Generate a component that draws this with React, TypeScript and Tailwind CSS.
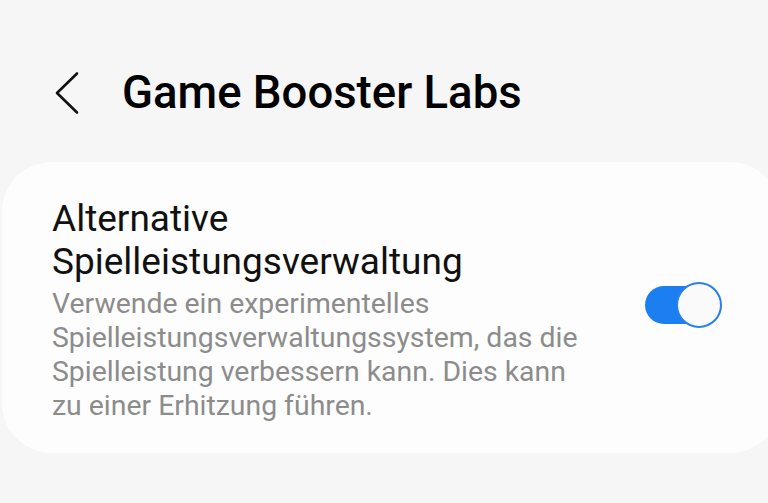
export default function App() {
  return (
    <div
      className="flex h-[503px] w-[768px] flex-col overflow-hidden bg-[#f6f6f6] text-black"
      style={{ fontFamily: "Roboto, 'Noto Sans', sans-serif" }}
    >
      <header className="flex h-[162px] items-center pl-[54px] pt-[24px]">
        <svg width="26" height="44" viewBox="0 0 26 44" fill="none" className="text-[#111]">
          <path d="M23 2.5 L3 22 L23 41.5" stroke="currentColor" strokeWidth="2.6" strokeLinecap="round" strokeLinejoin="round" />
        </svg>
        <h1 className="ml-[42px] text-[45.5px] font-medium leading-none">Game Booster Labs</h1>
      </header>

      <section className="ml-[2px] mr-[-12px] flex items-start rounded-[50px] bg-[#fdfdfd] pb-[30px] pl-[50px] pr-[58px] pt-[35px]">
        <div className="min-w-0 flex-1">
          <div className="text-[37px] leading-[43px] text-[#111]">
            Alternative
            <br />
            Spielleistungsverwaltung
          </div>
          <p className="mt-[4px] w-[545px] text-[28.4px] leading-[34px] text-[#8c8c8c]">
            Verwende ein experimentelles Spielleistungsverwaltungssystem, das die Spielleistung
            verbessern kann. Dies kann zu einer Erhitzung führen.
          </p>
        </div>
        <button
          type="button"
          aria-label="Alternative Spielleistungsverwaltung"
          className="relative mt-[85px] h-[46px] w-[77px] shrink-0"
        >
          <span className="absolute left-0 top-[4px] h-[38px] w-[66px] rounded-full bg-[#1b7ff2]" />
          <span className="absolute right-0 top-0 h-[46px] w-[46px] rounded-full border-[2.5px] border-[#2a80e6] bg-[#fafafa]" />
        </button>
      </section>
    </div>
  );
}
